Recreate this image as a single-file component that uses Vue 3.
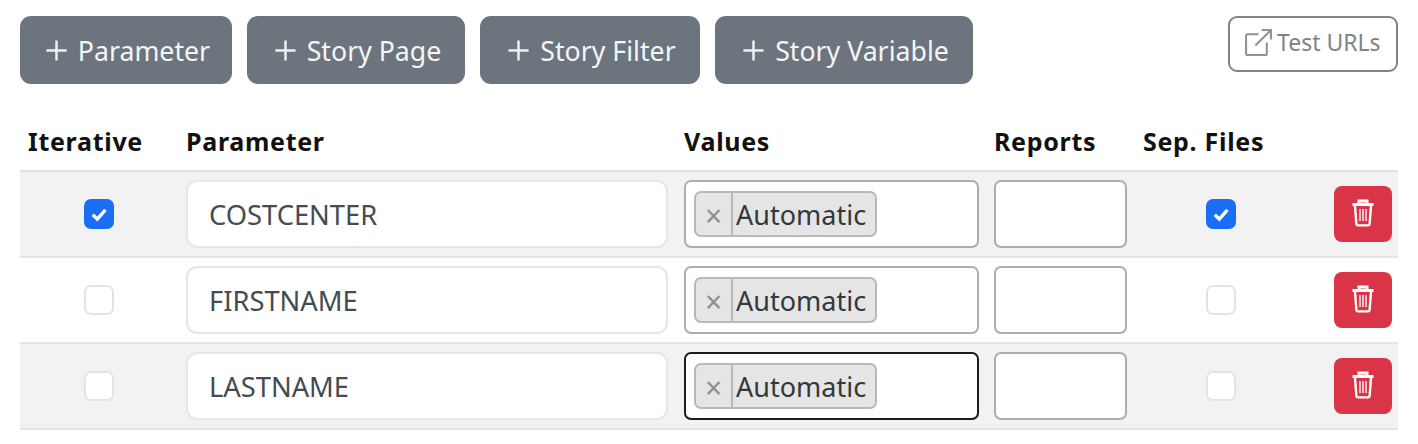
<script setup>
const addButtons = ['Parameter', 'Story Page', 'Story Filter', 'Story Variable']
const rows = [
  { name: 'COSTCENTER', iterative: true, files: true, striped: true, focused: false },
  { name: 'FIRSTNAME', iterative: false, files: false, striped: false, focused: false },
  { name: 'LASTNAME', iterative: false, files: false, striped: true, focused: true }
]
</script>

<template>
  <main class="page">
    <div class="toolbar">
      <div class="add-group">
        <button v-for="label in addButtons" :key="label" class="add-btn">
          <svg class="plus" viewBox="0 0 24 24" aria-hidden="true">
            <path d="M12 1.5v21M1.5 12h21" />
          </svg>
          <span>{{ label }}</span>
        </button>
      </div>
      <button class="test-btn">
        <svg class="ext" viewBox="0 0 28 28" aria-hidden="true">
          <path d="M14 6H3.5A1.5 1.5 0 0 0 2 7.5v17A1.5 1.5 0 0 0 3.5 26h17a1.5 1.5 0 0 0 1.5-1.5V14" />
          <path d="M11 17 26 2M17 2h9v9" />
        </svg>
        <span>Test URLs</span>
      </button>
    </div>

    <div class="table">
      <div class="row head">
        <div class="cell">Iterative</div>
        <div class="cell">Parameter</div>
        <div class="cell">Values</div>
        <div class="cell">Reports</div>
        <div class="cell">Sep. Files</div>
        <div class="cell"></div>
      </div>
      <div v-for="row in rows" :key="row.name" class="row body" :class="{ striped: row.striped }">
        <div class="cell center">
          <span class="check" :class="{ on: row.iterative }">
            <svg v-if="row.iterative" viewBox="0 0 20 20" aria-hidden="true"><path d="M5.5 10.5 8.8 13.6 14.6 7" /></svg>
          </span>
        </div>
        <div class="cell">
          <div class="input name">{{ row.name }}</div>
        </div>
        <div class="cell">
          <div class="select" :class="{ focused: row.focused }">
            <span class="chip">
              <span class="chip-x">×</span>
              <span class="chip-text">Automatic</span>
            </span>
          </div>
        </div>
        <div class="cell">
          <div class="select reports"></div>
        </div>
        <div class="cell center">
          <span class="check" :class="{ on: row.files }">
            <svg v-if="row.files" viewBox="0 0 20 20" aria-hidden="true"><path d="M5.5 10.5 8.8 13.6 14.6 7" /></svg>
          </span>
        </div>
        <div class="cell end">
          <button class="trash" aria-label="Delete">
            <svg viewBox="0 0 24 28" aria-hidden="true">
              <path class="lid" d="M1.5 5.500h21M8 4.500V2h8v2.500" />
              <path class="can" d="M4 7l1.400 18a1.500 1.500 0 0 0 1.500 1.400h10.200a1.500 1.500 0 0 0 1.500-1.400L20 7" />
              <path class="bars" d="M9 10v12M12 10v12M15 10v12" />
            </svg>
          </button>
        </div>
      </div>
    </div>
  </main>
</template>

<style>
html, body { margin: 0; background: #fff; }
</style>

<style scoped>
.page {
  box-sizing: border-box;
  width: 1418px;
  height: 444px;
  padding: 16px 20px 0;
  font-family: "Noto Sans", "Open Sans", sans-serif;
  overflow: hidden;
}
.toolbar {
  display: flex;
  justify-content: space-between;
  align-items: flex-start;
}
.add-group {
  display: grid;
  grid-template-columns: 212px 218px 220px 258px;
  gap: 15px;
}
.add-btn {
  display: flex;
  align-items: center;
  justify-content: center;
  gap: 10px;
  height: 68px;
  padding: 0 0 0 3px;
  border: 0;
  border-radius: 11px;
  background: #6c757d;
  color: #f3f5f6;
  font: 400 26.700px "Noto Sans", sans-serif;
}
.plus { width: 23px; height: 23px; fill: none; stroke: #eef0f2; stroke-width: 2.600; }
.test-btn {
  display: flex;
  align-items: center;
  gap: 4px;
  box-sizing: border-box;
  width: 170px;
  height: 56px;
  padding: 0 14px 4px;
  border: 2px solid #7c858d;
  border-radius: 9px;
  background: #fff;
  color: #7b848c;
  font: 400 23px "Noto Sans", sans-serif;
  white-space: nowrap;
}
.ext { width: 29px; height: 29px; flex: none; fill: none; stroke: #8b939a; stroke-width: 2; }
.table { margin-top: 30px; width: 1378px; }
.row {
  display: grid;
  grid-template-columns: 158px 498px 310px 149px 172px 91px;
}
.head {
  box-sizing: border-box;
  height: 58px;
  padding-bottom: 2px;
  align-items: center;
  border-bottom: 2px solid #dfe2e6;
}
.head .cell {
  padding-left: 8px;
  font-size: 25px;
  font-weight: 700;
  letter-spacing: 0.700px;
  color: #111;
  white-space: nowrap;
}
.body {
  box-sizing: border-box;
  height: 86px;
  align-items: center;
  border-bottom: 2px solid #e2e4e7;
}
.striped { background: #f2f2f2; }
.cell { min-width: 0; padding-left: 8px; }
.center { display: flex; justify-content: center; padding: 0; }
.end { display: flex; justify-content: flex-end; padding: 0 6px 0 0; }
.check {
  display: flex;
  align-items: center;
  justify-content: center;
  box-sizing: border-box;
  width: 30px;
  height: 30px;
  border: 2px solid #e1e4e8;
  border-radius: 7px;
  background: #fff;
}
.check.on { border: 0; background: #1a6ef5; }
.check svg { width: 28px; height: 28px; fill: none; stroke: #fff; stroke-width: 2.400; }
.input {
  box-sizing: border-box;
  width: 482px;
  height: 68px;
  padding: 0 21px;
  display: flex;
  align-items: center;
  border: 2px solid #e3e6ea;
  border-radius: 11px;
  background: #fff;
  color: #454b51;
  font-size: 27.300px;
}
.select {
  box-sizing: border-box;
  width: 295px;
  height: 68px;
  padding: 0 8px;
  display: flex;
  align-items: center;
  border: 2px solid #adadad;
  border-radius: 7px;
  background: #fff;
}
.select.focused { border-color: #1c1c1c; }
.select.reports { width: 133px; }
.chip {
  display: flex;
  align-items: stretch;
  height: 46px;
  box-sizing: border-box;
  border: 2px solid #b8b8b8;
  border-radius: 7px;
  background: #e5e5e5;
  color: #33383d;
  font-size: 27px;
}
.chip-x {
  display: flex;
  align-items: center;
  justify-content: center;
  width: 37px;
  box-sizing: border-box;
  border-right: 2px solid #b8b8b8;
  color: #8f8f8f;
  font-size: 30px;
  padding-top: 3px;
}
.chip-text { display: flex; align-items: center; padding: 0 9px 0 3px; }
.trash {
  display: flex;
  align-items: center;
  justify-content: center;
  width: 58px;
  height: 56px;
  padding: 0;
  border: 0;
  border-radius: 8px;
  background: #da3447;
}
.trash svg { width: 24px; height: 28px; margin-top: -3px; fill: none; stroke: #fff; }
.lid { stroke-width: 3; }
.can { stroke-width: 2.400; }
.bars { stroke-width: 1.600; stroke: #ffe3e8; }
</style>
